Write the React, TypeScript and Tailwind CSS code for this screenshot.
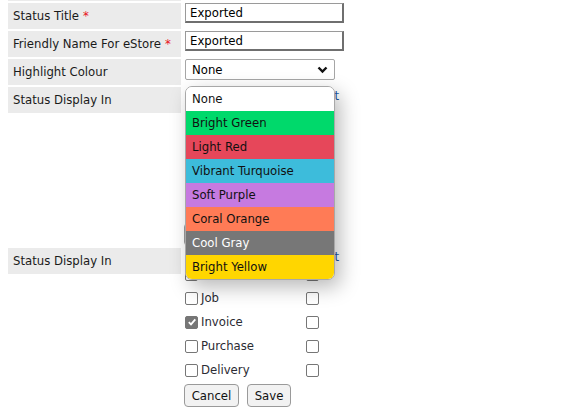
import React from "react";

const options: { name: string; bg: string; fg: string }[] = [
  { name: "None", bg: "bg-white", fg: "text-[#111]" },
  { name: "Bright Green", bg: "bg-[#00d96b]", fg: "text-[#111]" },
  { name: "Light Red", bg: "bg-[#e6475a]", fg: "text-[#111]" },
  { name: "Vibrant Turquoise", bg: "bg-[#3dbcdb]", fg: "text-[#111]" },
  { name: "Soft Purple", bg: "bg-[#c67ae0]", fg: "text-[#111]" },
  { name: "Coral Orange", bg: "bg-[#ff7b56]", fg: "text-[#111]" },
  { name: "Cool Gray", bg: "bg-[#777777]", fg: "text-white" },
  { name: "Bright Yellow", bg: "bg-[#ffd600]", fg: "text-[#111]" },
];

const docs = ["Estimate", "Job", "Invoice", "Purchase", "Delivery"];

function Label({ children }: { children: React.ReactNode }) {
  return (
    <div className="w-[173px] h-[26px] shrink-0 bg-[#ebebeb] px-[5px] flex items-center text-[#1a1a1a]">
      {children}
    </div>
  );
}

function Req() {
  return <span className="text-[#e8101a] ml-[4px]">*</span>;
}

function TextBox({ value }: { value: string }) {
  return (
    <div className="w-[159px] h-[20px] border-t border-l border-[#9a9a9a] border-r-2 border-b-2 border-r-[#6f6f6f] border-b-[#6f6f6f] bg-white px-[4px] flex items-center text-black">
      {value}
    </div>
  );
}

function Box({ checked }: { checked?: boolean }) {
  return (
    <span
      className={
        "w-[13px] h-[13px] rounded-[2px] border border-[#767676] flex items-center justify-center shrink-0 " +
        (checked ? "bg-[#767676]" : "bg-white")
      }
    >
      {checked && (
        <svg width="10" height="10" viewBox="0 0 10 10">
          <path d="M1.8 5.2 L4 7.4 L8.3 2.4" fill="none" stroke="white" strokeWidth="1.8" />
        </svg>
      )}
    </span>
  );
}

function DisplayIn() {
  return (
    <div className="flex flex-col">
      <div className="h-[14px] w-[154px] flex justify-end leading-[18px] overflow-visible">
        <span className="text-[#1c57a5]">Select</span>
      </div>
      {docs.map((d) => (
        <div key={d} className="h-[24px] flex items-center">
          <div className="w-[121px] flex items-center">
            <Box checked={d === "Invoice"} />
            <span className="ml-[3px] text-[#2b2b33]">{d}</span>
          </div>
          <Box />
        </div>
      ))}
      <div className="flex gap-[8px] mt-[2px] -ml-[1px]">
        <button className="h-[23px] w-[55px] rounded-[4px] border border-[#9a9a9a] bg-[#f2f2f2] text-[#111]">
          Cancel
        </button>
        <button className="h-[23px] w-[44px] rounded-[4px] border border-[#9a9a9a] bg-[#f2f2f2] text-[#111]">
          Save
        </button>
      </div>
    </div>
  );
}

export default function App() {
  return (
    <div className="w-[585px] h-[418px] bg-white overflow-hidden pl-[8px] text-[13px] font-['DejaVu_Sans_Condensed','DejaVu_Sans',sans-serif]">
      <div className="flex flex-col gap-[2px]">
        <div className="w-[173px] h-[1px] bg-[#ebebeb]" />
        <div className="flex gap-[4px]">
          <Label>
            Status Title<Req />
          </Label>
          <TextBox value="Exported" />
        </div>
        <div className="flex gap-[4px]">
          <Label>
            Friendly Name For eStore<Req />
          </Label>
          <TextBox value="Exported" />
        </div>
        <div className="flex gap-[4px]">
          <Label>Highlight Colour</Label>
          <div className="relative">
            <div className="w-[150px] h-[21px] border border-[#a6a6a6] rounded-[2px] bg-white flex items-center pl-[6px] pr-[6px] justify-between text-black">
              <span>None</span>
              <svg width="11" height="8" viewBox="0 0 11 8">
                <path d="M1.5 1.5 L5.5 5.5 L9.5 1.5" fill="none" stroke="#111" strokeWidth="2.4" />
              </svg>
            </div>
            <div className="absolute left-0 top-[27px] w-[150px] z-10 rounded-[7px] border border-[#a8a8a8] overflow-hidden bg-white shadow-[5px_7px_20px_rgba(0,0,0,0.28)]">
              {options.map((o) => (
                <div key={o.name} className={"h-[24px] flex items-center pl-[6px] " + o.bg + " " + o.fg}>
                  {o.name}
                </div>
              ))}
            </div>
          </div>
        </div>
        <div className="flex gap-[4px] items-start">
          <Label>Status Display In</Label>
          <DisplayIn />
        </div>
        <div className="flex gap-[4px] items-start">
          <Label>Status Display In</Label>
          <DisplayIn />
        </div>
      </div>
    </div>
  );
}
